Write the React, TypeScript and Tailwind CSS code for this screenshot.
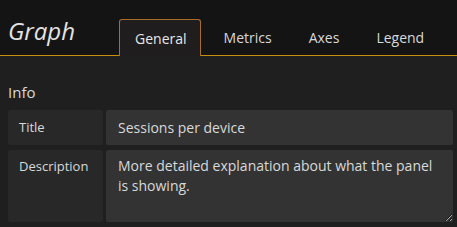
import React from "react";

export default function App() {
  const tabs = ["General", "Metrics", "Axes", "Legend"];
  return (
    <div
      className="w-[457px] h-[227px] overflow-hidden bg-[#1f1f1f] text-[#d8d9da]"
      style={{ fontFamily: '"Open Sans", "Noto Sans", sans-serif' }}
    >
      <div className="h-[55px] bg-[#141414] border-b border-[#c8900f] flex items-end box-content">
        <div className="self-start pl-2 pt-[15px] text-[24px] leading-[32px] italic text-[#e3e3e3]">Graph</div>
        <div className="flex items-end ml-[44px] gap-[5px] h-full">
          {tabs.map((t, i) => (
            <div
              key={t}
              className={
                i === 0
                  ? "h-[37px] pl-[15px] pr-[13px] mr-[2px] flex items-center text-[14px] text-[#e8e8e8] bg-[#1f1d1e] border border-b-0 border-[#a66d2b] rounded-t-[3px] mb-[-1px] relative z-10"
                  : "h-[37px] px-[15px] flex items-center text-[14px] text-[#d8d9da] border border-b-0 border-transparent"
              }
            >
              {t}
            </div>
          ))}
        </div>
      </div>
      <div className="pl-2 pr-1">
        <div className="pt-[26px] pb-[7px] text-[15px] leading-[21px] text-[#d8d9da]">Info</div>
        <div className="flex flex-col gap-[5px]">
          <div className="flex gap-[3px] h-[35px]">
            <div className="w-[95px] bg-[#282828] rounded-[2px] pl-[11px] flex items-center text-[13px] text-[#d8d9da]">Title</div>
            <div className="flex-1 bg-[#333333] rounded-[2px] pl-3 flex items-center text-[14px] text-[#d8d9da]">
              Sessions per device
            </div>
          </div>
          <div className="flex gap-[3px] h-[72px]">
            <div className="w-[95px] bg-[#282828] rounded-[2px] pl-[11px] pt-[6px] text-[13px] leading-[20px] text-[#d8d9da]">Description</div>
            <textarea
              className="flex-1 bg-[#333333] rounded-[2px] pl-3 pr-2 pt-[6px] text-[14px] leading-[20px] text-[#d8d9da] resize-y outline-none"
              style={{ fontFamily: '"Open Sans", "Noto Sans", sans-serif' }}
              defaultValue="More detailed explanation about what the panel is showing."
            />
          </div>
        </div>
      </div>
    </div>
  );
}
